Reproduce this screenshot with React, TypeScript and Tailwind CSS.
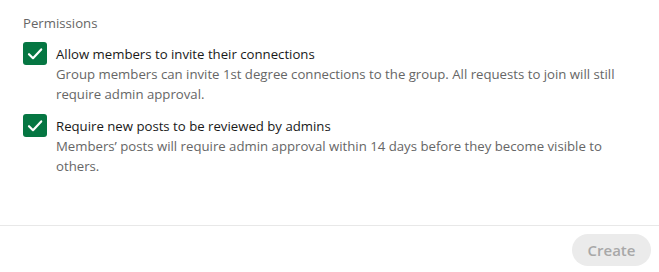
const permissions = [
  {
    title: 'Allow members to invite their connections',
    description:
      'Group members can invite 1st degree connections to the group. All requests to join will still require admin approval.',
  },
  {
    title: 'Require new posts to be reviewed by admins',
    description: 'Members’ posts will require admin approval within 14 days before they become visible to others.',
  },
];

function CheckedBox() {
  return (
    <span className="flex h-[23px] w-[24px] shrink-0 items-center justify-center rounded-[3px] bg-[#057642]">
      <svg viewBox="0 0 24 24" className="h-[24px] w-[24px]" fill="none">
        <path d="M6 12.2 10 16.2 18.2 7.4" stroke="white" strokeWidth="2.2" strokeLinecap="round" strokeLinejoin="round" />
      </svg>
    </span>
  );
}

export default function App() {
  return (
    <div className="w-[659px] h-[272px] bg-white flex flex-col" style={{ fontFamily: '"Open Sans", sans-serif' }}>
      <section className="h-[225px] px-[23px] pt-[13px]">
        <h3 className="text-[13.2px] leading-[20px] text-[#666666]">Permissions</h3>
        <ul className="mt-[9px] flex flex-col gap-[10px]">
          {permissions.map((p) => (
            <li key={p.title} className="flex items-start gap-[9px]">
              <CheckedBox />
              <div className="mt-[2px] pr-[1px] text-[13.2px] leading-[20px]">
                <p className="text-[#191919]">{p.title}</p>
                <p className="text-[#666666]">{p.description}</p>
              </div>
            </li>
          ))}
        </ul>
      </section>
      <footer className="border-t border-[#e8e8e8] flex justify-end pt-[8px] pr-[8px]">
        <button
          type="button"
          disabled
          className="h-[32px] w-[79px] rounded-full bg-[#ebebeb] text-[15px] font-semibold text-[#a8a8a8]"
        >
          Create
        </button>
      </footer>
    </div>
  );
}
